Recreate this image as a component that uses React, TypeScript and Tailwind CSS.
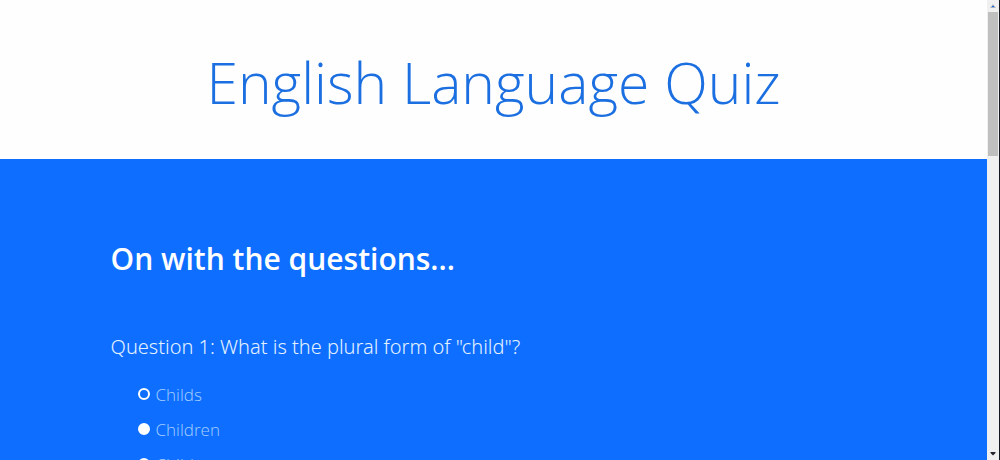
const options = ["Childs", "Children", "Childes"];

function ScrollBar() {
  return (
    <div
      aria-hidden="true"
      className="flex w-[13px] shrink-0 flex-col items-center border-r border-[#111820] bg-[#f0f0f0]"
    >
      <svg viewBox="0 0 12 12" className="h-3 w-full shrink-0">
        <path d="M3 8h6L6 4z" fill="#a9b4c4" />
        <path d="M5 6h2v1H5z" fill="#1b62d8" />
      </svg>
      <div className="h-[144px] w-[10px] bg-[#bfbfbf]" />
      <svg viewBox="0 0 12 12" className="mt-auto h-3 w-full shrink-0">
        <path d="M3.500 4h5v1L6 7.500 3.500 5z" fill="#20242c" />
      </svg>
    </div>
  );
}

export default function App() {
  return (
    <div className="flex h-screen font-['Open_Sans','Noto_Sans',sans-serif]">
      <div className="min-w-0 flex-1 overflow-y-auto bg-[#0d6eff] [scrollbar-width:none]">
        <header className="bg-[#fefefe] px-4 pt-[42px] pb-[37px] text-center">
          <h1 className="text-[57px] leading-[80px] font-light text-[#1b6fe0]">
            English Language Quiz
          </h1>
        </header>
        <main className="px-[11.2%] pt-20 pb-20 text-white">
          <h2 className="text-[30px] leading-10 font-semibold">On with the questions...</h2>
          <form className="mt-[52px]">
            <fieldset>
              <legend className="font-['Noto_Sans','Open_Sans',sans-serif] text-[20px] leading-8 font-light text-[#e4f2ff]">
                Question 1: What is the plural form of "child"?
              </legend>
              <div className="mt-[14px] flex flex-col pl-[27px]">
                {options.map((option, index) => (
                  <label
                    key={option}
                    className="flex h-[35px] items-center gap-[6px] text-[17px] font-light text-[#a5ceff]"
                  >
                    <input
                      type="radio"
                      name="question-1"
                      value={option}
                      defaultChecked={index === 0}
                      className="mb-[2px] size-3 appearance-none rounded-full border-2 border-white bg-white checked:bg-[#0d6eff]"
                    />
                    {option}
                  </label>
                ))}
              </div>
            </fieldset>
          </form>
        </main>
      </div>
      <ScrollBar />
    </div>
  );
}
